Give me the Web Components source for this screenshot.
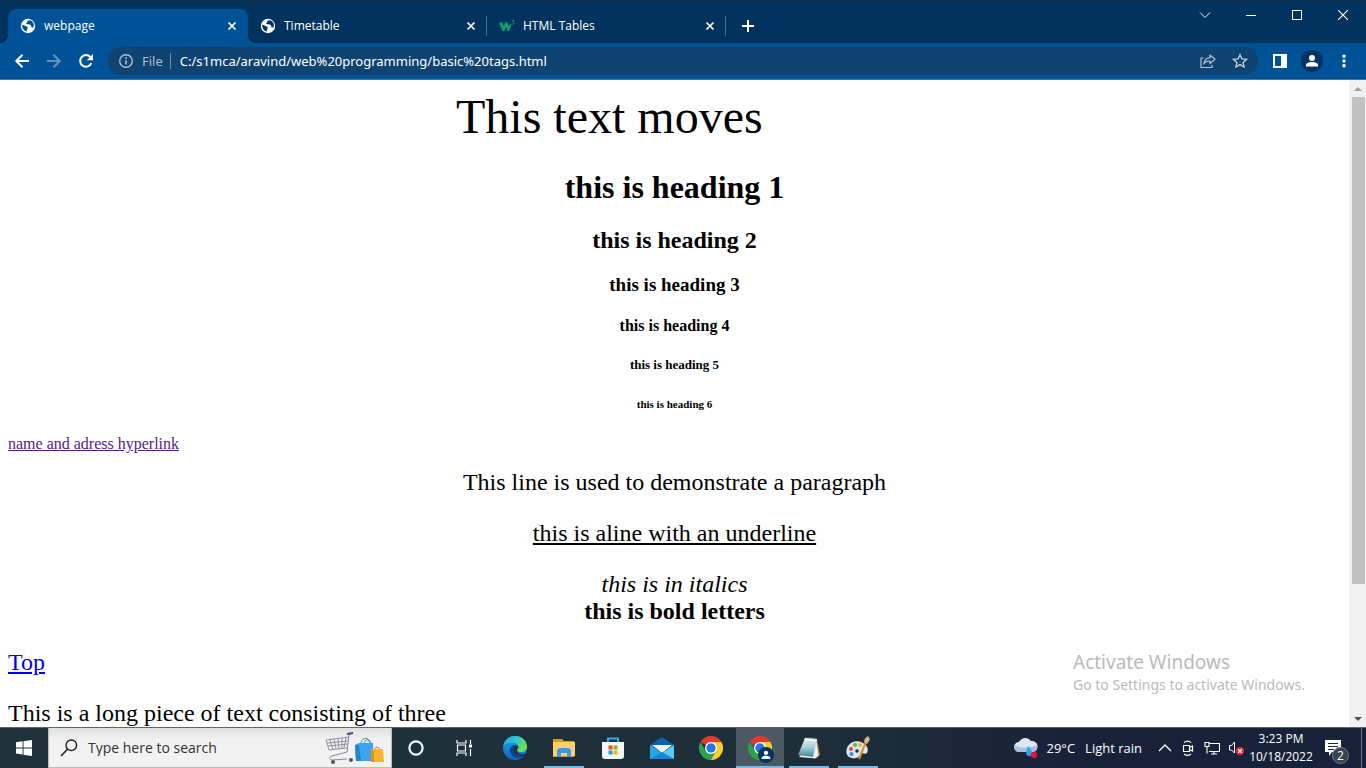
<!DOCTYPE html>
<html lang="en">
<head>
<meta charset="utf-8">
<title>webpage</title>
<style>
html, body { height: 100%; margin: 0; }
body { overflow: hidden; background: #fff; font: 12px/16px "Open Sans", "Noto Sans", sans-serif; }
</style>
</head>
<body>
<desktop-screen></desktop-screen>

<script>
const ICONS = {
  globe: [16, '<circle cx="8" cy="8" r="7.2" fill="#fff"/><path d="M2.2 6.6 6.6 8.6c1.2.6 1.4 1.6.7 2.4-.6.7-.4 1.6-.2 2.6C4 13.2 2 10.6 2.2 6.6Z" fill="var(--back)"/><path d="M9.6 2.2c-2.2.3-2.6 1-2.4 1.9.2.8-.7 1-1.3 1.3l1.8.9c1 .5 2.4.1 3.1.9.7.9.1 1.8 1 2.3.6.3 1.3-.1 1.9-.8C14.5 5.5 12.7 2.9 9.6 2.2Z" fill="var(--back)"/>'],
  w3: [16, '<path d="M0 4.600h3.400l1.200 4 1.500-4h2.300l1.500 4 1-2.600h1.500L10.300 13H8.600L7 9 5.300 13H3.500Z" fill="#11a06c"/><path d="M12.800 2.600h2.200L13.900 4c1.500.2 1.400 2.300-.1 2.300-.6 0-1-.2-1.200-.6" fill="none" stroke="#11a06c" stroke-width=".8"/>'],
  close: [10, '<path d="M1.500 1.500l7 7m0-7l-7 7" stroke="#fff" stroke-width="1.700"/>'],
  plus: [14, '<path d="M7 1v12M1 7h12" stroke="#fff" stroke-width="2"/>'],
  down: [12, '<path d="M1 3.500l5 5 5-5" stroke="#e8eef4" fill="none"/>'],
  min: [10, '<path d="M0 5.500h10" stroke="#fff"/>'],
  max: [10, '<path d="M.5.5h9v9h-9z" stroke="#fff" fill="none"/>'],
  exit: [10, '<path d="M0 0l10 10M10 0L0 10" stroke="#fff" stroke-width="1.100"/>'],
  back: [16, '<path d="M15 8H2.500M8.500 1.800L2.300 8l6.200 6.200" stroke="#fff" stroke-width="2" fill="none"/>'],
  forward: [16, '<path d="M1 8h12.500M7.500 1.800L13.700 8l-6.200 6.200" stroke="#6294c2" stroke-width="2" fill="none"/>'],
  reload: [16, '<path d="M13.300 10.200A5.800 5.800 0 1 1 12.300 4" stroke="#fff" stroke-width="2" fill="none"/><path d="M15 1v6.200H8.800Z" fill="#fff"/>'],
  info: [16, '<circle cx="8" cy="8" r="6.300" stroke="#a9bed3" stroke-width="1.400" fill="none"/><path d="M8 7.200v4.200M8 4.300v1.600" stroke="#a9bed3" stroke-width="1.600"/>'],
  share: [16, '<path d="M3.500 5H1v9.500h11V12" stroke="#afc2d5" stroke-width="1.200" fill="none"/><path d="M10 2l5 4.300-5 4.300V8C7 8 5.200 8.800 3.800 11 4.200 7.500 6.300 5 10 4.600Z" stroke="#afc2d5" stroke-width="1.200" fill="none" stroke-linejoin="round"/>'],
  star: [16, '<path d="M8 1.800l1.900 4.100 4.500.5-3.300 3 .9 4.400L8 11.600l-4 2.200.9-4.400-3.300-3 4.500-.5Z" stroke="#bccbdb" stroke-width="1.400" fill="none"/>'],
  side: [16, '<path d="M2 2h12v12H2z" stroke="#fff" stroke-width="2" fill="none"/><path d="M9 2h5v12H9z" fill="#fff"/>'],
  person: [22, '<circle cx="11" cy="11" r="11" fill="#04345f"/><circle cx="11" cy="8" r="3" fill="#fff"/><path d="M5 16.500v-1.200c0-2.200 3-3.300 6-3.300s6 1.100 6 3.300v1.200Z" fill="#fff"/>'],
  dots: [16, '<path d="M8 1.800v3M8 6.500v3M8 11.200v3" stroke="#fff" stroke-width="3"/>'],
  windows: [16, '<path d="M0 2.300 6.600 1.300V7.500H0zM7.500 1.200 16 0v7.500H7.500zM0 8.400h6.600v6.200L0 13.600zM7.500 8.400H16V16l-8.500-1.300z" fill="#fff"/>'],
  search: [18, '<circle cx="11.300" cy="6.300" r="5.300" stroke="#222" stroke-width="1.400" fill="none"/><path d="M7.500 10.200L1 17" stroke="#222" stroke-width="1.600"/>'],
  cortana: [18, '<circle cx="9" cy="9" r="6.600" stroke="#f5f7f8" stroke-width="2.200" fill="none"/>'],
  task: [18, '<path d="M2 1v3h9V1M2 17v-3h9v3M2.500 6h8v6h-8zM15.500 1v4M15.500 10v7" stroke="#fff" stroke-width="1.200" fill="none"/><path d="M14 5.500h3v3h-3z" fill="#fff"/>'],
  edge: [24, '<defs><linearGradient id="a" x1="0" y1="0" x2="1" y2=".5"><stop offset="0" stop-color="#1ba6e6"/><stop offset=".5" stop-color="#2fc4cf"/><stop offset="1" stop-color="#6fe052"/></linearGradient><linearGradient id="b" x2="0" y2="1"><stop stop-color="#27a7e8"/><stop offset="1" stop-color="#0b63c0"/></linearGradient></defs><circle cx="12" cy="12" r="12" fill="url(#b)"/><path d="M.3 9.800C1.500 4 6 0 12 0c7 0 12 5 12 10.400 0 3.400-2.500 5.700-5.800 5.700-2.600 0-4.200-1-4.200-2.100 0-.8 1.400-1.300 1.400-3.200 0-2.500-2.500-4.300-6-4.300-4 0-7.500 1.300-9.100 3.300Z" fill="url(#a)"/><path d="M10 9.300c-3 1.700-4 5.200-2.200 8.500 2.700 4.900 9.400 5.500 14.200.9-3.800 2-8.800 1.200-10.900-2.200-1.400-2.300-1.300-4.700-.1-6.400.5-.7.2-1.300-1-.8Z" fill="#10408f"/><path d="M11 10.100c-1 2-1.200 4.200.1 6.400 2 3.300 7 4.200 10.800 2.400.7-.8.300-1.200-.5-.9-3.300 1.200-7.400-.8-7.400-4 0-.8 1.400-1.400 1.400-3.200 0-1.200-3.300-2.500-4.400-.7Z" fill="#203440"/>'],
  folder: [24, '<path d="M1 3h9l2 2h10v16H1z" fill="#d99a1c"/><path d="M1 6h22v14H1z" fill="#fbd263"/><path d="M5 21v-7l2-2h10l2 2v7h-4v-4H9v4z" fill="#3b9be0"/><path d="M9 17h6v3H9z" fill="#fbd263"/>'],
  store: [24, '<path d="M7 7V2.500h10V7" fill="none" stroke="#39a9dc" stroke-width="2"/><path d="M1 6h22v14a3 3 0 0 1-3 3H4a3 3 0 0 1-3-3Z" fill="#f4f5f6"/><path d="M7.500 9.500h4v4h-4z" fill="#e84b2c"/><path d="M12.500 9.500h4v4h-4z" fill="#82b71b"/><path d="M7.500 14.500h4v4h-4z" fill="#1ba1e2"/><path d="M12.500 14.500h4v4h-4z" fill="#f8b412"/>'],
  mail: [24, '<path d="M0 9 12 1l12 8v4H0z" fill="#0c62ae"/><path d="M2 9h20l-10 8z" fill="#f1f3f6"/><path d="M0 9l12 8 12-8v14H0z" fill="#23a8e9"/><path d="M24 9v14L12 17z" fill="#57cbf5"/><path d="M0 23l12-7 12 7z" fill="#1589d8"/>'],
  chrome: [24, '<path d="M12 12 1.600 6A12 12 0 0 1 22.400 6Z" fill="#e23b2e"/><path d="M12 12V6h10.400A12 12 0 0 1 12 24Z" fill="#fccb2c"/><path d="M12 24A12 12 0 0 1 1.600 6l5.200 9L12 12l5.200 3Z" fill="#2ba24c"/><circle cx="12" cy="12" r="6" fill="#fff"/><circle cx="12" cy="12" r="4.700" fill="#2b73e4"/>'],
  notepad: [24, '<defs><linearGradient id="n" x2="0" y2="1"><stop stop-color="#e6f3f5"/><stop offset=".5" stop-color="#a4ced6"/><stop offset="1" stop-color="#3f8795"/></linearGradient></defs><path d="M20 3l3 16-3 3-4-2z" fill="#a98452"/><path d="M19 3l2.500 16-3 3.500L2 21Z" fill="#eef1f0"/><path d="M8 2l12 1-4 18L1 19z" fill="url(#n)"/><path d="M8 2l12 1-.5 2L7.300 4z" fill="#fff"/><path d="M9 .8v2m3-1.800v2m3-1.800v2m3-1.500v2" stroke="#7c8888"/>'],
  paint: [24, '<path d="M2 10C5 5 12 4 17 7c4 2 6 6 4 10-2 2-4-1-6 1-2 3-4 5-9 4C0 21-1 15 2 10Z" fill="#dbe7f1"/><circle cx="5" cy="13" r="2" fill="#d94a38"/><circle cx="9" cy="9" r="2" fill="#64b83d"/><circle cx="14" cy="9" r="2" fill="#e6b43a"/><circle cx="5.500" cy="18" r="2" fill="#3e86d2"/><circle cx="11" cy="15" r="1.800" fill="#1e3440"/><path d="M20 6l-7 17" stroke="#e08a2e" stroke-width="2"/><path d="M18 6c0-3 2-5 4-6l2 3c-1 2-2 4-3 5z" fill="#d8b184"/>'],
  cloud: [24, '<path d="M5 16a5 5 0 0 1 0-10A7 7 0 0 1 17 5a5.500 5.500 0 0 1 2 11Z" fill="#dce6f5"/><path d="M5 16a5 5 0 0 1-4-7c3 3 14 4 22 0 1 4-1 7-4 7Z" fill="#a9bfdf"/><path d="M14 10c5 5 6 10 1 10-4 0-3-5-1-10Z" fill="#29a8ea"/><circle cx="20" cy="19" r="3.200" fill="#e0143c"/>'],
  up: [14, '<path d="M1 10l6-6 6 6" stroke="#fff" stroke-width="1.300" fill="none"/>'],
  meet: [16, '<path d="M3.500 5.500h6v6h-6zM9.500 7.500l3-1.500v5l-3-1.500M4 2.500c2-1.600 5-1.600 7 0M4 14c2 1.600 5 1.600 7 0" stroke="#fff" stroke-width="1.200" fill="none"/>'],
  net: [16, '<path d="M5 3.500h10.500v8H5M1 2.500h4v4H1zM3 6.500v7M10 11.500v2.500M7 14h6" stroke="#fff" stroke-width="1.100" fill="none"/>'],
  sound: [16, '<path d="M1.500 5.500h2l3-3.500v11l-3-3h-2z" stroke="#fff" fill="none"/><circle cx="12" cy="11" r="4.300" fill="#dd2435"/><path d="M10.200 9.200l3.600 3.600m0-3.600l-3.600 3.600" stroke="#fff" stroke-width="1.300"/>'],
  note: [18, '<path d="M1 1h16v12H8l-3 4v-4H1z" fill="#fff"/><path d="M4 4.500h10M4 7.500h10M4 10.500h6" stroke="#18253a" stroke-width="1.200"/>']
};

const CART = `<svg width="60" height="34" viewBox="0 0 60 34" aria-hidden="true">
<g fill="none" stroke="#8b8698"><path d="M28 2l-4 2-2 17-15 4c-3 1-3 4 0 4l15-1"/><path d="M24 6L1 9l3 10 18-2M2 12l21-2M3 15l20-2M5 9l3 10M9 8l2 10M13 8l1 10M17 7v10M21 7l-2 10" stroke-width=".9"/></g>
<path d="M22 2l6-1v2l-6 1z" fill="#5d3e8a"/><circle cx="8" cy="31" r="2" fill="#57515f"/><circle cx="26" cy="29" r="2" fill="#57515f"/>
<path d="M36 13c0-7 8-8 9 0M39 14c0-7 7-7 7 0" stroke="#2f87c4" fill="none"/><path d="M30 14l4-2h14v18H31z" fill="#3da5ed"/><path d="M30 14h4l2 16h-5z" fill="#2484cc"/>
<path d="M49 20c0-5 6-5 6 0" stroke="#c7821a" fill="none"/><path d="M46 18h12l1 13H46z" fill="#fbb42e"/><path d="M46 18l3 2v11h-3z" fill="#e38f1c"/></svg>`;

function define(name, html, setup) {
  const template = document.createElement('template');
  template.innerHTML = `<style>
    *, :host { box-sizing: border-box; }
    button { font: inherit; color: inherit; background: none; border: 0; padding: 0; margin: 0; display: flex; align-items: center; justify-content: center; flex: none; }
  </style>${html}`;
  customElements.define(name, class extends HTMLElement {
    constructor() {
      super();
      this.attachShadow({ mode: 'open' }).append(template.content.cloneNode(true));
    }
    connectedCallback() { if (setup) setup(this, this.shadowRoot); }
  });
}

define('ui-icon', '<style>:host { display: block; flex: none; } svg { display: block; }</style><span></span>', (el, root) => {
  const [size, art] = ICONS[el.getAttribute('name')];
  root.querySelector('span').innerHTML = `<svg width="${size}" height="${size}" viewBox="0 0 ${size} ${size}" aria-hidden="true">${art}</svg>`;
});

define('browser-tab', `<style>
  :host { --back: #01335e; display: flex; position: relative; align-items: center; flex: 0 1 239px; height: 34px; padding: 0 10px 0 12px; gap: 8px; color: #fff; border-radius: 8px 8px 0 0; }
  :host([active]) { --back: #005297; background: #005297; flex-basis: 240px; }
  :host(:not([active]))::after { content: ""; position: absolute; right: 0; top: 7px; width: 1px; height: 20px; background: #47698a; }
  :host([active])::before, :host([active])::after { content: ""; position: absolute; bottom: 0; width: 8px; height: 8px; }
  :host([active])::before { left: -8px; background: radial-gradient(circle at 0 0, transparent 8px, #005297 8px); }
  :host([active])::after { right: -8px; background: radial-gradient(circle at 100% 0, transparent 8px, #005297 8px); }
  .title { flex: 1; overflow: hidden; white-space: nowrap; }
  button { width: 12px; height: 16px; }
</style><slot name="icon"></slot><span class="title"><slot></slot></span><button aria-label="Close tab"><ui-icon name="close"></ui-icon></button>`);

define('tab-strip', `<style>
  :host { display: flex; flex: none; height: 43px; padding: 9px 0 0 8px; background: #01335e; box-shadow: inset 0 1px #112f4a; }
  .tabs { display: flex; flex: 1; min-width: 0; }
  .new { width: 28px; height: 34px; margin-left: 8px; }
  .controls { display: flex; margin-top: -9px; height: 30px; }
  .controls button { width: 46px; }
</style>
<div class="tabs"><slot></slot><button class="new" aria-label="New tab"><ui-icon name="plus"></ui-icon></button></div>
<div class="controls"><button aria-label="Search tabs"><ui-icon name="down"></ui-icon></button><button aria-label="Minimize"><ui-icon name="min"></ui-icon></button><button aria-label="Maximize"><ui-icon name="max"></ui-icon></button><button aria-label="Close"><ui-icon name="exit"></ui-icon></button></div>`);

define('browser-toolbar', `<style>
  :host { display: flex; flex: none; align-items: center; height: 37px; padding: 0 6px; background: #005297; border-bottom: 1px solid #3b78ae; }
  button { width: 32px; height: 32px; }
  .box { display: flex; flex: 1; min-width: 0; align-items: center; height: 28px; margin: 0 6px; padding: 0 2px 0 10px; border-radius: 14px; background: #0f4372; font: 13px/16px "Noto Sans", "Open Sans", sans-serif; }
  label { color: #a9bed3; margin-left: 8px; padding-right: 7px; line-height: 16px; border-right: 1px solid #6d8dad; }
  input { flex: 1; min-width: 0; border: 0; outline: 0; padding: 0 0 0 9px; background: none; color: #fff; font: inherit; }
</style>
<button aria-label="Back"><ui-icon name="back"></ui-icon></button><button aria-label="Forward"><ui-icon name="forward"></ui-icon></button><button aria-label="Reload"><ui-icon name="reload"></ui-icon></button>
<div class="box"><ui-icon name="info"></ui-icon><label for="url">File</label><input id="url" spellcheck="false" value="C:/s1mca/aravind/web%20programming/basic%20tags.html"><button aria-label="Share"><ui-icon name="share"></ui-icon></button><button aria-label="Bookmark"><ui-icon name="star"></ui-icon></button></div>
<button aria-label="Side panel"><ui-icon name="side"></ui-icon></button><button aria-label="Profile"><ui-icon name="person"></ui-icon></button><button aria-label="Menu"><ui-icon name="dots"></ui-icon></button>`);

define('scroll-rail', `<style>
  :host { display: flex; flex-direction: column; align-items: center; flex: none; width: 17px; background: #f1f1f1; }
  i { display: flex; flex: none; height: 17px; align-items: center; }
  i::before { content: ""; border: 4px solid transparent; border-top: 0; border-bottom: 4px solid #a0a0a0; }
  i:last-child::before { border-top: 4px solid #505050; border-bottom: 0; }
  .track { flex: 1; align-self: stretch; padding: 0 1px 0 3px; }
  .thumb { height: 79.5%; background: #c1c1c1; }
</style><i></i><div class="track"><div class="thumb"></div></div><i></i>`);

define('basic-tags', `<style>
  :host { display: block; flex: 1; min-width: 0; overflow: hidden; padding: 8px; color: #000; background: #fff; font: 24px/27px "Liberation Serif", "Times New Roman", serif; text-align: center; }
  .marquee { padding-left: 448px; text-align: left; font-size: 48px; line-height: 58px; white-space: nowrap; }
  h1, h2, h3, h4, h5, h6, p { margin: 0; }
  h1 { margin-top: 23px; font-size: 32px; line-height: 37px; }
  h2 { margin-top: 21px; font-size: 24px; line-height: 27px; }
  h3 { margin-top: 20px; font-size: 19px; line-height: 21px; }
  h4 { margin-top: 22px; font-size: 16px; line-height: 18px; }
  h5 { margin-top: 22px; font-size: 13px; line-height: 16px; }
  h6 { margin-top: 25px; font-size: 11px; line-height: 12px; }
  .small { margin-top: 25px; font-size: 16px; line-height: 18px; text-align: left; }
  .small a { color: #551a8b; }
  p { margin-top: 24px; }
  .first { margin-top: 16px; }
  .left { text-align: left; }
  a { color: #0000ee; }
</style>
<div class="marquee">This text moves</div>
<h1>this is heading 1</h1><h2>this is heading 2</h2><h3>this is heading 3</h3><h4>this is heading 4</h4><h5>this is heading 5</h5><h6>this is heading 6</h6>
<div class="small"><a href="#address">name and adress hyperlink</a></div>
<p class="first">This line is used to demonstrate a paragraph</p>
<p><u>this is aline with an underline</u></p>
<p><em>this is in italics</em><br><b>this is bold letters</b></p>
<p class="left"><a href="#top">Top</a></p>
<p class="left">This is a long piece of text consisting of three</p>`);

define('activation-note', `<style>
  :host { display: block; position: absolute; right: 57px; bottom: 32px; width: 236px; color: #bababa; white-space: nowrap; font: 14px/20px "Noto Sans", "Open Sans", sans-serif; }
  strong { display: block; font-weight: 400; font-size: 19px; line-height: 25px; }
</style><strong><slot name="title"></slot></strong><slot></slot>`);

define('task-button', `<style>
  :host { display: block; flex: none; width: 48px; height: 40px; }
  button { position: relative; width: 100%; height: 100%; }
  :host([active]) button { background: #4b5962; }
  :host([open]) button::after { content: ""; position: absolute; left: 4px; right: 4px; bottom: 0; height: 2px; background: #76b9ed; }
  :host([active]) button::after { left: 0; right: 0; }
  .badge { position: absolute; right: 10px; bottom: 5px; }
  .badge svg { display: block; }
</style><button><slot></slot></button>`, (el, root) => {
  const button = root.querySelector('button');
  button.setAttribute('aria-label', el.getAttribute('label'));
  if (el.hasAttribute('active')) button.insertAdjacentHTML('beforeend', `<span class="badge"><svg width="16" height="16" viewBox="0 0 22 22" aria-hidden="true">${ICONS.person[1]}</svg></span>`);
});

define('task-search', `<style>
  :host { display: flex; flex: 0 1 344px; min-width: 0; height: 40px; align-items: center; padding: 0 6px 0 11px; background: linear-gradient(#dedede, #f2f2f2 12px); border: 1px solid #b9bdc0; border-top: 0; }
  input { flex: 1; min-width: 0; border: 0; outline: 0; padding: 0 0 0 10px; background: none; font: inherit; font-size: 14px; color: #333; }
  input::placeholder { color: #333; opacity: 1; }
</style><ui-icon name="search"></ui-icon><input aria-label="Search" placeholder="Type here to search">${CART}`);

define('system-tray', `<style>
  :host { display: flex; align-items: center; height: 40px; color: #fff; white-space: nowrap; }
  .weather { gap: 8px; font-size: 13px; margin-right: 16px; }
  .weather span + span { margin-left: 2px; }
  .icons { display: flex; gap: 8px; }
  .clock { width: 74px; flex-direction: column; line-height: 18px; }
  .notes { position: relative; width: 43px; height: 40px; padding-right: 13px; }
  .count { position: absolute; right: 12px; bottom: 4px; width: 17px; height: 17px; border-radius: 50%; background: #3a424d; border: 1px solid #737b85; line-height: 15px; }
  .desk { width: 5px; height: 40px; border-left: 1px solid #6d7685; }
</style>
<button class="weather"><ui-icon name="cloud"></ui-icon><span>29°C</span><span>Light rain</span></button>
<div class="icons"><button aria-label="Hidden icons"><ui-icon name="up"></ui-icon></button><button aria-label="Meet now"><ui-icon name="meet"></ui-icon></button><button aria-label="Network"><ui-icon name="net"></ui-icon></button><button aria-label="Volume"><ui-icon name="sound"></ui-icon></button></div>
<button class="clock"><span>3:23 PM</span><span>10/18/2022</span></button>
<button class="notes" aria-label="Notifications"><ui-icon name="note"></ui-icon><span class="count">2</span></button>
<button class="desk" aria-label="Show desktop"></button>`);

define('task-bar', `<style>
  :host { display: flex; flex: none; height: 41px; border-top: 1px solid #5c666d; background: linear-gradient(90deg, #20333c, #1d2e39 60%, #172239 80%, #17223b); }
  .apps { display: flex; gap: 1px; margin-left: 3px; }
  .apps, task-button { flex: none; }
  system-tray { margin-left: auto; }
</style>
<task-button label="Start"><ui-icon name="windows"></ui-icon></task-button>
<task-search></task-search>
<task-button label="Cortana"><ui-icon name="cortana"></ui-icon></task-button>
<task-button label="Task view"><ui-icon name="task"></ui-icon></task-button>
<div class="apps">
<task-button label="Edge"><ui-icon name="edge"></ui-icon></task-button>
<task-button label="File Explorer" open><ui-icon name="folder"></ui-icon></task-button>
<task-button label="Store"><ui-icon name="store"></ui-icon></task-button>
<task-button label="Mail"><ui-icon name="mail"></ui-icon></task-button>
<task-button label="Chrome"><ui-icon name="chrome"></ui-icon></task-button>
<task-button label="Chrome, profile" open active><ui-icon name="chrome"></ui-icon></task-button>
<task-button label="Notepad" open><ui-icon name="notepad"></ui-icon></task-button>
<task-button label="Paint" open><ui-icon name="paint"></ui-icon></task-button>
</div>
<system-tray></system-tray>`);

define('desktop-screen', `<style>
  :host { display: flex; flex-direction: column; height: 100vh; }
  main { position: relative; display: flex; flex: 1; min-height: 0; }
</style>
<tab-strip><browser-tab active><ui-icon slot="icon" name="globe"></ui-icon>webpage</browser-tab><browser-tab><ui-icon slot="icon" name="globe"></ui-icon>Timetable</browser-tab><browser-tab><ui-icon slot="icon" name="w3"></ui-icon>HTML Tables</browser-tab></tab-strip>
<browser-toolbar></browser-toolbar>
<main><basic-tags></basic-tags><scroll-rail></scroll-rail><activation-note><span slot="title">Activate Windows</span>Go to Settings to activate Windows.</activation-note></main>
<task-bar></task-bar>`);
</script>
</body>
</html>
